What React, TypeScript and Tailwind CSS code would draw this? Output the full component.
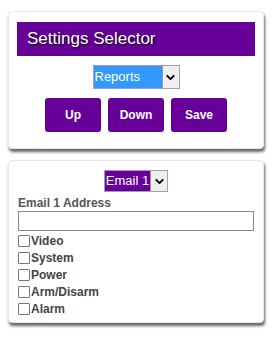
import { ChevronDown } from 'lucide-react';

const alerts = ['Video', 'System', 'Power', 'Arm/Disarm', 'Alarm'];

function FakeSelect({ label, tone, size }: { label: string; tone: 'blue' | 'purple'; size: string }) {
  return (
    <div className={`flex border border-[#a99bb8] bg-[#f0f0f0] ${size}`}>
      <div
        className={`flex flex-1 items-center whitespace-nowrap px-[1px] text-[13px] text-white ${
          tone === 'blue' ? 'bg-[#3399ff]' : 'bg-[#660099] text-[12.5px]'
        }`}
      >
        {label}
      </div>
      <div className="flex w-[17px] shrink-0 items-center justify-center border-l border-[#999] bg-[#efefef]">
        <ChevronDown className="h-[13px] w-[13px] text-black" strokeWidth={3.5} />
      </div>
    </div>
  );
}

export default function App() {
  return (
    <div className="min-h-[338px] w-[274px] bg-white pt-[11px] font-['Liberation_Sans',Arial,sans-serif]">
      <div className="mx-[8px] w-[256px] rounded-[4px] border border-[#e8e8e8] bg-white px-[8px] pb-[16px] pt-[10px] shadow-[1px_3px_3px_#666]">
        <div className="flex h-[34px] items-center bg-[#660099] px-[10px] text-[17px] text-white [text-shadow:1px_1px_2px_#000]">
          Settings Selector
        </div>
        <div className="mt-[9px] flex justify-center">
          <FakeSelect label="Reports" tone="blue" size="h-[24px] w-[87px]" />
        </div>
        <div className="mt-[9px] flex justify-center gap-[7px]">
          {['Up', 'Down', 'Save'].map((b) => (
            <button
              key={b}
              className="h-[34px] w-[56px] rounded-[3px] bg-[#660099] text-[12px] font-bold text-white"
            >
              {b}
            </button>
          ))}
        </div>
      </div>

      <div className="mx-[8px] mt-[11px] w-[256px] rounded-[4px] border border-[#e8e8e8] bg-white px-[9px] pb-[5px] pt-[9px] shadow-[1px_3px_3px_#666]">
        <div className="flex justify-center">
          <FakeSelect label="Email 1" tone="purple" size="h-[22px]" />
        </div>
        <div className="mt-[3px] text-[12px] font-bold leading-[16px] text-[#555]">Email 1 Address</div>
        <div className="h-[20px] w-full border border-[#888] bg-white" />
        <ul className="mt-[1px]">
          {alerts.map((a) => (
            <li key={a} className="flex h-[17px] items-center text-[12px] font-bold text-[#444]">
              <span className="mr-[1px] h-[12px] w-[12px] rounded-[1px] border border-[#777] bg-white" />
              {a}
            </li>
          ))}
        </ul>
      </div>
    </div>
  );
}
